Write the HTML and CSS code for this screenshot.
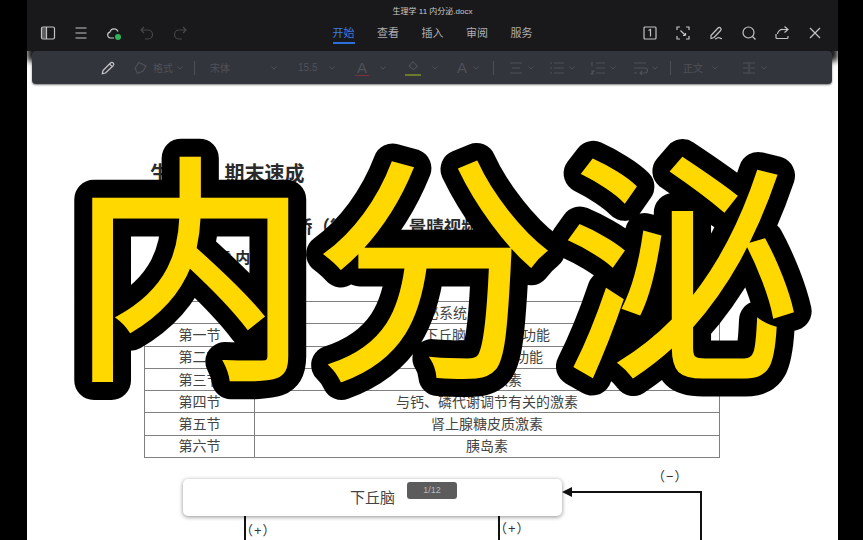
FILE: index.html

```html
<!DOCTYPE html>
<html lang="zh-CN">
<head>
  <meta charset="UTF-8">
  <title>生理学 11 内分泌.docx</title>
  <link rel="stylesheet" href="styles.css">
</head>
<body>
  <svg class="defs" width="0" height="0">
    <symbol id="caret" viewBox="0 0 6 4"><path d="M0.5 0.5 3 3.2 5.5 0.5" fill="none" stroke="currentColor" stroke-width="1"/></symbol>
  </svg>

  <div class="app">
    <header class="topbar">
      <div class="filename">生理学 11 内分泌.docx</div>
      <div class="topbar-row">
        <div class="tools tools-left">
          <svg class="icon" viewBox="0 0 16 16"><rect x="1.500" y="2" width="13" height="12" rx="1.500"/><path d="M6.500 2v12"/><rect x="2" y="2.500" width="4.500" height="11" fill="currentColor" stroke="none" opacity="0.4"/></svg>
          <svg class="icon" viewBox="0 0 16 16"><path d="M2.500 3h11M2.500 8h11M2.500 13h11"/></svg>
          <svg class="icon" viewBox="0 0 16 16"><path d="M8 13H4.500a3 3 0 0 1-.6-5.900A4.300 4.300 0 0 1 12 6.500"/><circle cx="12" cy="12" r="3" fill="#2fb45a" stroke="none"/></svg>
          <svg class="icon dim" viewBox="0 0 16 16"><path d="M5 2 2 5l3 3M2 5h7a4.500 4.500 0 0 1 0 9H6"/></svg>
          <svg class="icon dim" viewBox="0 0 16 16"><path d="m11 2 3 3-3 3M14 5H7a4.500 4.500 0 0 0 0 9h3"/></svg>
        </div>
        <nav class="tabs">
          <a class="tab active">开始</a>
          <a class="tab">查看</a>
          <a class="tab">插入</a>
          <a class="tab">审阅</a>
          <a class="tab">服务</a>
        </nav>
        <div class="tools tools-right">
          <svg class="icon" viewBox="0 0 16 16"><rect x="2" y="2" width="12" height="12" rx="1"/><path d="M6.500 5.500 8.500 4.500V11.500"/></svg>
          <svg class="icon" viewBox="0 0 16 16"><path d="M5 2H2v3M11 2h3v3M2 11v3h3M14 11v3h-3M5.500 5.500l5 5M10.500 10.500v-2.500M10.500 10.500H8"/></svg>
          <svg class="icon" viewBox="0 0 16 16"><path d="M3 10.500 10 3a1.800 1.800 0 0 1 2.600 2.500L6 12.500l-3 1zM7 14c2 0 2-1.500 3.500-1.500S12 14 14 13.500"/></svg>
          <svg class="icon" viewBox="0 0 16 16"><circle cx="7.500" cy="7.500" r="5.500"/><path d="m11.500 11.500 3 3"/></svg>
          <svg class="icon" viewBox="0 0 16 16"><path d="M10.500 1.500 14 4.500l-3.500 3M14 4.500H9A5 5 0 0 0 3.500 9M2 9v3.500a1 1 0 0 0 1 1h10a1 1 0 0 0 1-1V11"/></svg>
          <svg class="icon" viewBox="0 0 16 16"><path d="m3 3 10 10M13 3 3 13"/></svg>
        </div>
      </div>
    </header>

    <div class="toolbar">
      <svg class="icon pencil" viewBox="0 0 16 16"><path d="M3 10.500 10.500 3a1.900 1.900 0 0 1 2.700 2.700L5.500 13l-3.200.7zM9.500 4l2.700 2.700"/></svg>
      <div class="tb-group">
        <svg class="icon" viewBox="0 0 16 16"><path d="M6 2.500 13 6l-3 5-5.500 2.500L2 8z"/></svg>
        <span>格式</span><svg class="caret"><use href="#caret"/></svg>
      </div>
      <i class="tb-sep"></i>
      <div class="tb-group spread-font"><span>宋体</span><svg class="caret"><use href="#caret"/></svg></div>
      <div class="tb-group spread-size"><span>15.5</span><svg class="caret"><use href="#caret"/></svg></div>
      <div class="tb-group gap-wide"><span class="tb-a under-red">A</span><svg class="caret"><use href="#caret"/></svg></div>
      <div class="tb-group gap-wide">
        <svg class="icon under-green" viewBox="0 0 16 16"><path d="M8 2 13 7l-4.500 4L3.500 7z"/></svg>
        <svg class="caret"><use href="#caret"/></svg>
      </div>
      <div class="tb-group"><span class="tb-a">A</span><svg class="caret"><use href="#caret"/></svg></div>
      <i class="tb-sep"></i>
      <div class="tb-group">
        <svg class="icon" viewBox="0 0 16 16"><path d="M2 3h12M4 8h8M2 13h12"/></svg>
        <svg class="caret"><use href="#caret"/></svg>
      </div>
      <div class="tb-group">
        <svg class="icon" viewBox="0 0 16 16"><path d="M5 3h10M5 8h10M5 13h10M1 3h2M1 8h2M1 13h2"/></svg>
        <svg class="caret"><use href="#caret"/></svg>
      </div>
      <div class="tb-group">
        <svg class="icon" viewBox="0 0 16 16"><path d="M6 3h9M6 8h9M6 13h9M2 2v4M1 11h3l-3 3h3"/></svg>
        <svg class="caret"><use href="#caret"/></svg>
      </div>
      <div class="tb-group">
        <svg class="icon" viewBox="0 0 16 16"><path d="M2 3h12M2 8h11a2.500 2.500 0 0 1 0 5H8M10 11l-2 2 2 2M2 13h3"/></svg>
        <svg class="caret"><use href="#caret"/></svg>
      </div>
      <i class="tb-sep"></i>
      <div class="tb-group gap-mid"><span>正文</span><svg class="caret"><use href="#caret"/></svg></div>
      <div class="tb-group">
        <svg class="icon" viewBox="0 0 16 16"><path d="M2 3h5M2 8h5M2 13h5M9 3h5M9 8h5M9 13h5M8 2v12"/></svg>
        <svg class="caret"><use href="#caret"/></svg>
      </div>
    </div>

    <main class="doc">
      <h1 class="doc-title">生理学 期末速成</h1>
      <p class="doc-author">主讲老师：医学小桥（微博名），景晴视频</p>
      <h2 class="doc-chapter">第十一章 内分泌</h2>
      <table class="outline">
        <colgroup><col class="col-sec"><col></colgroup>
        <tr><td colspan="2">内分泌系统</td></tr>
        <tr><td>第一节</td><td>下丘脑的内分泌功能</td></tr>
        <tr><td>第二节</td><td>垂体的内分泌功能</td></tr>
        <tr><td>第三节</td><td>甲状腺激素</td></tr>
        <tr><td>第四节</td><td>与钙、磷代谢调节有关的激素</td></tr>
        <tr><td>第五节</td><td>肾上腺糖皮质激素</td></tr>
        <tr><td>第六节</td><td>胰岛素</td></tr>
      </table>

      <div class="diagram">
        <div class="node">下丘脑</div>
        <span class="sign minus">（−）</span>
        <span class="sign plus-a">（+）</span>
        <span class="sign plus-b">（+）</span>
        <svg class="wires" width="811" height="90" viewBox="0 0 811 90">
          <path d="M218 50V90M472 50V90M674 90V29H542" fill="none" stroke="#111" stroke-width="2"/>
          <path d="M535 29 545 24V34z" fill="#111"/>
        </svg>
      </div>
    </main>

    <div class="page-badge">1/12</div>

    <svg class="headline" width="863" height="540" viewBox="0 0 863 540">
      <defs><text id="headline-text" x="70 315 561" y="360">内分泌</text></defs>
      <use class="headline-outline" href="#headline-text"/>
      <use class="headline-fill" href="#headline-text"/>
    </svg>
  </div>
</body>
</html>
```

FILE: styles.css

```css
* {
  box-sizing: border-box;
}
html, body {
  margin: 0;
  height: 540px;
  overflow: hidden;
  background: #000;
}
body {
  font-family: "Liberation Sans", "Noto Sans CJK SC", sans-serif;
}
.defs {
  position: absolute;
}
.app {
  width: 811px;
  height: 540px;
  margin-left: 27px;
  background: #fff;
  overflow: hidden;
}
.icon {
  width: 16px;
  height: 16px;
  fill: none;
  stroke: currentColor;
  stroke-width: 1.2;
  flex: none;
}
.topbar {
  height: 51px;
  background: #19191b;
  color: #c4c4c6;
  box-shadow: 0 10px 6px #19191b;
  position: relative;
}
.filename {
  height: 22px;
  padding-top: 6px;
  text-align: center;
  font-size: 8px;
  line-height: 11px;
  color: #c9c9cb;
}
.topbar-row {
  display: grid;
  grid-template-columns: 1fr auto 1fr;
  align-items: center;
  height: 22px;
}
.tools {
  display: flex;
  align-items: center;
}
.tools-left {
  padding-left: 13px;
  gap: 17px;
}
.tools-right {
  justify-content: flex-end;
  padding-right: 15px;
  gap: 17px;
}
.dim {
  color: #47474a;
}
.tabs {
  display: flex;
  gap: 22.500px;
}
.tab {
  font-size: 11px;
  line-height: 22px;
  color: #aeaeb0;
}
.tab.active {
  color: #3d7be0;
  box-shadow: inset 0 -2px 0 #2a6fdc;
}
.toolbar {
  position: relative;
  display: grid;
  grid-template-columns: 33px 61px 16px 88px 57px 50px 50px 38px 15px 41px 41px 42px 38px 13px 58px 30px;
  align-items: center;
  height: 33px;
  margin: 0 6px 0 5px;
  padding-left: 68px;
  background: #33353c;
  border-radius: 4px;
  color: #4f5158;
  font-size: 10px;
  box-shadow: 0 1px 2px rgba(0, 0, 0, 0.5);
}
.pencil {
  color: #c4c4c6;
}
.tb-group {
  display: flex;
  align-items: center;
  gap: 4px;
}
.gap-wide {
  gap: 11px;
}
.gap-mid {
  gap: 9px;
}
.spread-font {
  justify-content: space-between;
  width: 67px;
}
.spread-size {
  justify-content: space-between;
  width: 37px;
}
.caret {
  width: 6px;
  height: 4px;
  flex: none;
}
.tb-sep {
  width: 1px;
  height: 14px;
  background: #4c4e55;
}
.tb-a {
  font-size: 15px;
  width: 14px;
  text-align: center;
}
.under-red {
  border-bottom: 1.500px solid #7d2f3a;
  line-height: 15px;
}
.under-green {
  border-bottom: 2px solid #6d7a2c;
}
.doc {
  color: #333;
}
.doc-title {
  margin: 77px 0 0 123px;
  font-size: 20px;
  line-height: 26px;
  font-weight: 700;
  word-spacing: 9px;
  color: #2b2b2b;
}
.doc-author {
  margin: 28px 0 0 128px;
  font-size: 17.500px;
  line-height: 24px;
  font-weight: 700;
  white-space: nowrap;
  color: #2b2b2b;
}
.doc-chapter {
  margin: 8px 0 0 144px;
  font-size: 15px;
  line-height: 21px;
  font-weight: 700;
  color: #2b2b2b;
}
.outline {
  width: 576px;
  margin: 33px 0 0 117px;
  border-collapse: collapse;
  table-layout: fixed;
  font-size: 14px;
}
.col-sec {
  width: 110px;
}
.outline td {
  height: 22.300px;
  padding: 0;
  border: 1px solid #808080;
  text-align: center;
  line-height: 20px;
  color: #444;
}
.diagram {
  position: relative;
  height: 90px;
  margin-top: 5px;
}
.node {
  position: absolute;
  left: 156px;
  top: 16px;
  width: 379px;
  height: 37px;
  padding: 9px 0 0 0;
  text-align: center;
  font-size: 15px;
  line-height: 20px;
  color: #444;
  background: #fff;
  border-radius: 5px;
  box-shadow: 0 1px 4px rgba(0, 0, 0, 0.45);
  z-index: 1;
}
.wires {
  position: absolute;
  left: 0;
  top: 0;
}
.sign {
  position: absolute;
  font-size: 13px;
  line-height: 16px;
  letter-spacing: 1px;
  color: #333;
  white-space: nowrap;
}
.minus {
  left: 625px;
  top: 6px;
}
.plus-a {
  left: 213px;
  top: 60px;
}
.plus-b {
  left: 467px;
  top: 58px;
}
.page-badge {
  position: absolute;
  left: 407px;
  top: 482px;
  width: 50px;
  height: 17px;
  background: #5c5c5c;
  border-radius: 3px;
  color: #b9b9b9;
  font-size: 9px;
  line-height: 17px;
  text-align: center;
  z-index: 2;
}
.headline {
  position: absolute;
  left: 0;
  top: 0;
  z-index: 3;
}
.headline text {
  font-family: "Noto Sans CJK SC", sans-serif;
  font-size: 240px;
  font-weight: 400;
}
.headline-outline {
  fill: #000;
  stroke: #000;
  stroke-width: 39px;
  stroke-linejoin: round;
}
.headline-fill {
  fill: #ffd800;
  stroke: #ffd800;
  stroke-width: 3px;
  stroke-linejoin: miter;
}
```
